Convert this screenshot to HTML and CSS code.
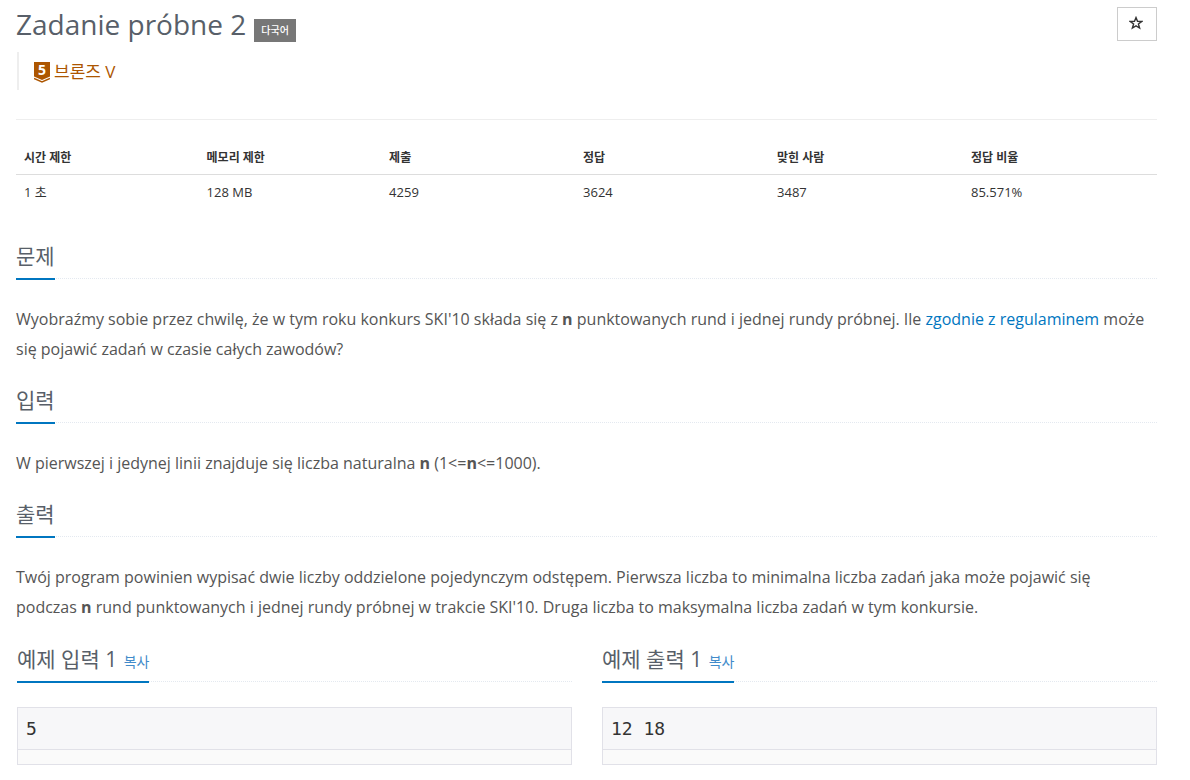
FILE: index.html
```html
<!DOCTYPE html>
<html lang="ko">
<head>
<meta charset="utf-8">
<meta name="viewport" content="width=device-width, initial-scale=1">
<title>Zadanie próbne 2</title>
<link rel="stylesheet" href="styles.css">
</head>
<body>
<main class="page">
  <header class="problem-header">
    <div class="title-row">
      <h1 class="title">Zadanie próbne 2</h1>
      <span class="label">다국어</span>
      <button class="favorite" type="button" aria-label="즐겨찾기">
        <svg class="star" viewBox="0 0 14 14" aria-hidden="true"><path d="M7 1.600 8.500 5.300l4.200.2-3.300 2.500 1.200 4L7 9.900l-3.600 2.100 1.200-4L1.300 5.500l4.200-.2z"/></svg>
      </button>
    </div>
    <blockquote class="tier">
      <svg class="tier-icon" viewBox="0 0 16 21" aria-hidden="true"><path class="tier-fill" d="M0 0h16v14.500l-8 3.500-8-3.500z"/><path class="tier-line" d="M0 16.500l8 3.500 8-3.500"/><text x="8" y="13" text-anchor="middle">5</text></svg>
      <span>브론즈 V</span>
    </blockquote>
  </header>
  <table class="info">
    <thead><tr><th class="narrow">시간 제한</th><th class="narrow">메모리 제한</th><th>제출</th><th>정답</th><th>맞힌 사람</th><th>정답 비율</th></tr></thead>
    <tbody><tr><td>1 초</td><td>128 MB</td><td>4259</td><td>3624</td><td>3487</td><td>85.571%</td></tr></tbody>
  </table>
  <section class="section">
    <div class="headline"><h2>문제</h2></div>
    <p>Wyobraźmy sobie przez chwilę, że w tym roku konkurs SKI'10 składa się z <strong>n</strong> punktowanych rund i jednej rundy próbnej. Ile <a href="#">zgodnie z regulaminem</a> może się pojawić zadań w czasie całych zawodów?</p>
  </section>
  <section class="section">
    <div class="headline"><h2>입력</h2></div>
    <p>W pierwszej i jedynej linii znajduje się liczba naturalna <strong>n</strong> (1&lt;=<strong>n</strong>&lt;=1000).</p>
  </section>
  <section class="section">
    <div class="headline"><h2>출력</h2></div>
    <p>Twój program powinien wypisać dwie liczby oddzielone pojedynczym odstępem. Pierwsza liczba to minimalna liczba zadań jaka może pojawić się podczas <strong>n</strong> rund punktowanych i jednej rundy próbnej w trakcie SKI'10. Druga liczba to maksymalna liczba zadań w tym konkursie.</p>
  </section>
  <div class="samples">
    <section>
      <div class="headline"><h2>예제 입력 1 <button class="copy" type="button">복사</button></h2></div>
      <div class="sample"><pre>5
</pre></div>
    </section>
    <section>
      <div class="headline"><h2>예제 출력 1 <button class="copy" type="button">복사</button></h2></div>
      <div class="sample"><pre>12 18
</pre></div>
    </section>
  </div>
</main>
</body>
</html>
```
FILE: styles.css
```css
* { box-sizing: border-box; }
body { margin: 0; background: #fff; color: #333; font: 13px/20px "Open Sans", "Noto Sans CJK KR", sans-serif; }
.page { padding: 7px 33px 0 16px; }
.problem-header { border-bottom: 1px solid #eee; padding-bottom: 29px; }
.title-row { display: flex; align-items: flex-start; }
.title { margin: 0; color: #585f69; font-size: 28px; line-height: 34px; font-weight: 400; }
.label { margin: 12px 0 0 8px; padding: 0 7px; background: #777; color: #fff; font-size: 10px; line-height: 23px; font-weight: 500; }
.favorite { margin-left: auto; width: 40px; height: 34px; padding: 0 2px 2px 0; border: 1px solid #ccc; background: #fff; display: flex; align-items: center; justify-content: center; }
.star { width: 14px; height: 14px; fill: none; stroke: #333; stroke-width: 1.4; }
.tier { display: flex; align-items: center; gap: 4px; margin: 10px 0 0 1px; padding: 2px 0 0 15px; height: 38px; border-left: 2px solid #eee; color: #ad5600; font-size: 17px; line-height: 24px; }
.tier-icon { width: 16px; height: 21px; }
.tier-fill { fill: #ad5600; }
.tier-line { fill: none; stroke: #ad5600; stroke-width: 1.4; }
.tier-icon text { fill: #fff; font: 700 14px/14px "Open Sans", sans-serif; }
.info { width: 100%; margin: 20px 0 0; border-collapse: collapse; table-layout: fixed; }
.info th, .info td { padding: 7px 8px; text-align: left; line-height: 20px; }
.info th { padding: 8px 8px 6px; border-bottom: 1px solid #ddd; font-size: 12px; }
.info .narrow { width: 16%; }
.section { margin-top: 31px; }
.headline { display: flex; border-bottom: 1px dotted #e4e9f0; margin-bottom: 25px; }
h2 { margin: 0 0 -2px; padding-bottom: 6px; border-bottom: 2px solid #0076c0; color: #585f69; font-size: 21px; line-height: 32px; font-weight: 400; }
p { margin: 0 0 20px; padding-right: 8px; color: #555; font-size: 16px; line-height: 30px; }
a { color: #0076c0; text-decoration: none; }
.section + .section { margin-top: 0; }
.samples { display: grid; grid-template-columns: 1fr 1fr; gap: 30px; margin: 21px 0 0 1px; }
.copy { margin-left: 1px; border: 0; padding: 0; background: none; color: #428bca; font: inherit; font-size: 14px; line-height: 16px; }
.sample { border: 1px solid #e1e1e8; padding-bottom: 14px; background: #fafafa; }
.sample pre { margin: 0; padding: 8px; border-bottom: 1px solid #e1e1e8; background: #f7f7f9; color: #333; font: 18px/25px "DejaVu Sans Mono", monospace; }
```
